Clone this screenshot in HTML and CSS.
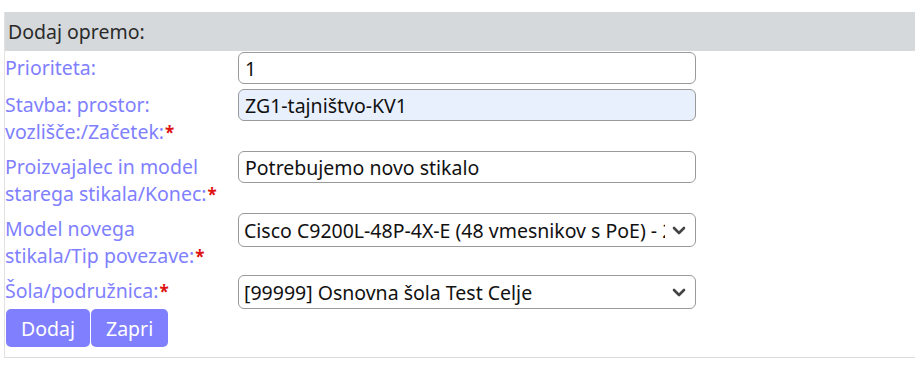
FILE: index.html
```html
<!DOCTYPE html>
<html lang="sl">
<head>
<meta charset="utf-8">
<title>Dodaj opremo</title>
<link rel="stylesheet" href="styles.css">
</head>
<body>
<div class="panel">
  <div class="panel-head">Dodaj opremo:</div>
  <form class="form">
    <div class="grid">
      <label class="lbl" for="prio">Prioriteta:</label>
      <div class="field"><input id="prio" class="ctl" type="text" value="1"></div>

      <label class="lbl" for="stavba">Stavba: prostor: vozlišče:/Začetek:<span class="req">*</span></label>
      <div class="field"><input id="stavba" class="ctl autofill" type="text" value="ZG1-tajništvo-KV1"></div>

      <label class="lbl" for="proiz">Proizvajalec in model starega stikala/Konec:<span class="req">*</span></label>
      <div class="field"><input id="proiz" class="ctl" type="text" value="Potrebujemo novo stikalo"></div>

      <label class="lbl" for="model">Model novega <span class="nw">stikala/Tip</span> povezave:<span class="req">*</span></label>
      <div class="field selwrap">
        <select id="model" class="ctl sel">
          <option>Cisco C9200L-48P-4X-E (48 vmesnikov s PoE) - 2x 10G SFP+</option>
        </select>
        <svg class="chev" width="14" height="9" viewBox="0 0 14 9" aria-hidden="true"><path d="M2 2 L7 7 L12 2" fill="none" stroke="#444" stroke-width="2.6" stroke-linecap="round" stroke-linejoin="round"/></svg>
      </div>

      <label class="lbl" for="sola">Šola/podružnica:<span class="req">*</span></label>
      <div class="field selwrap">
        <select id="sola" class="ctl sel">
          <option>[99999] Osnovna šola Test Celje</option>
        </select>
        <svg class="chev" width="14" height="9" viewBox="0 0 14 9" aria-hidden="true"><path d="M2 2 L7 7 L12 2" fill="none" stroke="#444" stroke-width="2.6" stroke-linecap="round" stroke-linejoin="round"/></svg>
      </div>
    </div>
    <div class="actions">
      <button type="button" class="btn">Dodaj</button>
      <button type="button" class="btn">Zapri</button>
    </div>
  </form>
</div>
</body>
</html>
```

FILE: styles.css
```css
html, body {
  margin: 0;
  padding: 0;
  background: #fff;
}
body {
  font-family: "Noto Sans", "Open Sans", sans-serif;
  font-size: 19.5px;
}
.panel {
  margin: 12px 0 0 4px;
  border-left: 1px solid #e2e2e2;
  border-bottom: 1px solid #dcdcdc;
  padding-bottom: 10px;
}
.panel-head {
  background: #d6d9dc;
  color: #2a2a2a;
  font-size: 19.5px;
  height: 39px;
  line-height: 39px;
  padding-left: 3px;
}
.form {
  margin: 0;
  padding-top: 1px;
}
.grid {
  display: grid;
  grid-template-columns: 233px 458px;
  row-gap: 5px;
  align-items: start;
}
.lbl {
  color: #8080ff;
  line-height: 27px;
  padding: 2px 10px 0 0;
}
.nw {
  white-space: nowrap;
}
.req {
  color: #d11;
  font-weight: bold;
  font-size: 17px;
  margin-left: 1px;
}
.ctl {
  box-sizing: border-box;
  width: 458px;
  height: 32px;
  border: 1px solid #9a9a9a;
  border-radius: 6px;
  background: #fff;
  font-family: "Noto Sans", "Open Sans", sans-serif;
  font-size: 19.5px;
  color: #111;
  padding: 0 6px;
  margin: 0;
  display: block;
}
.autofill {
  background: #e8f0fe;
}
.selwrap {
  position: relative;
}
.sel {
  -webkit-appearance: none;
  appearance: none;
  height: 34px;
  padding: 0 30px 0 5px;
}
.chev {
  position: absolute;
  right: 10px;
  top: 13px;
  pointer-events: none;
}
.actions {
  display: flex;
  gap: 1px;
  padding-left: 1px;
}
.btn {
  background: #8080ff;
  color: #fff;
  border: 0;
  border-radius: 5px;
  height: 38px;
  font-family: "Noto Sans", "Open Sans", sans-serif;
  font-size: 19.5px;
  padding: 0 15px;
  cursor: pointer;
}
```
